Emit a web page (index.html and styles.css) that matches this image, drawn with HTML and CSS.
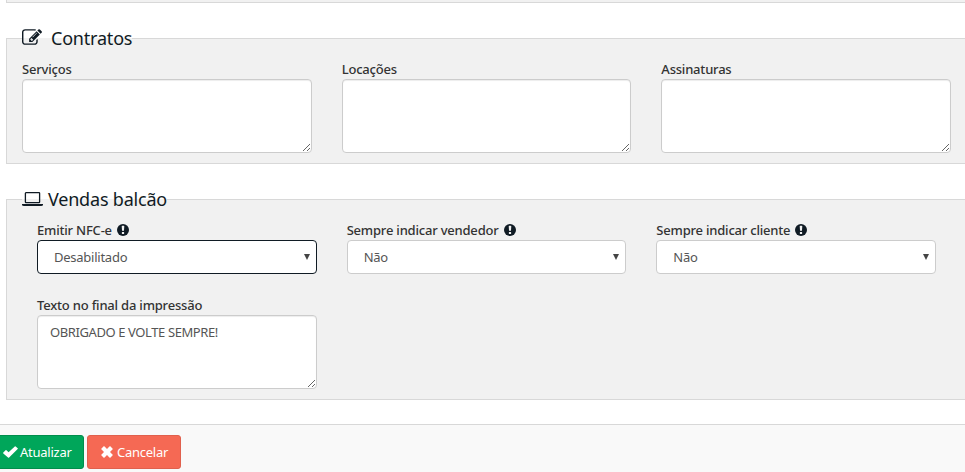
FILE: index.html
```html
<!DOCTYPE html>
<html lang="pt-BR">
<head>
<meta charset="utf-8">
<title>Configurações</title>
<link rel="stylesheet" href="styles.css">
</head>
<body>
<svg width="0" height="0" class="defs">
  <symbol id="alert" viewBox="0 0 12 12"><circle cx="6" cy="6" r="6" fill="#101b24"/><path d="M4.7 2.2Q4.7 1.7 5.2 1.7H6.8Q7.3 1.7 7.3 2.2L7 6.3Q6.9 6.9 6 6.9T5 6.3ZM4.9 7.9H7.1V9.9H4.9Z" fill="#f1f1f1"/></symbol>
  <symbol id="caret" viewBox="0 0 6 6"><path d="M0 0H6L3 6Z" fill="#444"/></symbol>
</svg>
<div class="previous"></div>
<form class="form">
  <fieldset class="section">
    <legend class="title"><svg class="edit" viewBox="0 128 1792 1408"><path fill="#101b24" d="M888 1184l116-116-152-152-116 116v56h96v96h56zm440-720q-16-16-33 1l-350 350q-17 17-1 33t33-1l350-350q17-17 1-33zm80 594v190q0 119-84.5 203.5t-203.5 84.5h-832q-119 0-203.5-84.5t-84.5-203.5v-832q0-119 84.5-203.5t203.5-84.5h832q63 0 117 25 15 7 18 23 3 17-9 29l-49 49q-14 14-32 8-23-6-45-6h-832q-66 0-113 47t-47 113v832q0 66 47 113t113 47h832q66 0 113-47t47-113v-126q0-13 9-22l64-64q15-15 35-7t20 29zm-96-738l288 288-672 672h-288v-288zm444 132l-92 92-288-288 92-92q28-28 68-28t68 28l152 152q28 28 28 68t-28 68z"/></svg><span class="contracts">Contratos</span></legend>
    <div class="grid">
      <div class="field"><label for="servicos">Serviços</label><textarea id="servicos"></textarea></div>
      <div class="field"><label for="locacoes">Locações</label><textarea id="locacoes"></textarea></div>
      <div class="field"><label for="assinaturas">Assinaturas</label><textarea id="assinaturas"></textarea></div>
    </div>
  </fieldset>
  <fieldset class="section sales">
    <legend class="title"><svg class="laptop" viewBox="0 0 21 15"><path d="M4 .7H17Q17.6.7 17.6 1.3V10.1Q17.6 10.7 17 10.7H4Q3.4 10.7 3.4 10.1V1.3Q3.4.7 4 .7Z" fill="none" stroke="#101b24" stroke-width="1.3"/><path d="M0 12H21V12.8Q21 14 19 14H2Q0 14 0 12.8Z" fill="#101b24"/></svg><span>Vendas balcão</span></legend>
    <div class="grid inset">
      <div class="field"><label for="nfce">Emitir NFC-e<svg class="alert"><use href="#alert"/></svg></label><div class="pick"><select id="nfce" class="active"><option>Desabilitado</option></select><svg class="caret"><use href="#caret"/></svg></div></div>
      <div class="field"><label for="vendedor">Sempre indicar vendedor<svg class="alert"><use href="#alert"/></svg></label><div class="pick"><select id="vendedor"><option>Não</option></select><svg class="caret"><use href="#caret"/></svg></div></div>
      <div class="field"><label for="cliente">Sempre indicar cliente<svg class="alert"><use href="#alert"/></svg></label><div class="pick"><select id="cliente"><option>Não</option></select><svg class="caret"><use href="#caret"/></svg></div></div>
      <div class="field"><label for="texto">Texto no final da impressão</label><textarea id="texto" class="caps">OBRIGADO E VOLTE SEMPRE!</textarea></div>
    </div>
  </fieldset>
</form>
<footer class="actions">
  <button type="button" class="btn save"><svg width="15" height="12" viewBox="0 0 14 12" preserveAspectRatio="none"><path d="M.3 6.6L2.4 4.3Q2.8 3.9 3.2 4.3L5.2 6.2L11 .4Q11.4 0 11.8.4L13.7 2.3Q14.1 2.7 13.7 3.1L5.7 11.4Q5.2 11.9 4.7 11.4L.3 7.4Q-.1 7 .3 6.6Z" fill="#fff"/></svg><span>Atualizar</span></button>
  <button type="button" class="btn cancel"><svg width="12" height="12" viewBox="0 0 12 12"><path d="M.3 2.7L2.7.3Q3 0 3.3.3L6 3L8.7.3Q9 0 9.3.3L11.7 2.7Q12 3 11.7 3.3L9 6L11.7 8.7Q12 9 11.7 9.3L9.3 11.7Q9 12 8.7 11.7L6 9L3.3 11.7Q3 12 2.7 11.7L.3 9.3Q0 9 .3 8.7L3 6L.3 3.3Q0 3 .3 2.7Z" fill="#fff"/></svg><span>Cancelar</span></button>
</footer>
</body>
</html>
```
FILE: styles.css
```css
* { box-sizing: border-box; }
body {
  margin: 0;
  height: 472px;
  overflow: hidden;
  background: #fff;
  color: #333;
  font: 13px/20px "Noto Sans", sans-serif;
}
.defs { display: block; }
svg { flex: none; }
.previous {
  height: 3px;
  margin-left: 6px;
  background: #f1f1f1;
  border-bottom: 1px solid #d8d8d8;
  border-left: 1px solid #d8d8d8;
}
.form { width: 967px; padding: 19px 0 0 6px; }
.section {
  width: 975px;
  height: 142px;
  margin: 0;
  padding: 0 0 0 15px;
  border: 1px solid #d8d8d8;
  background: #f1f1f1;
}
.sales { height: 217px; margin-top: 19px; }
.title {
  display: flex;
  align-items: center;
  height: 32px;
  padding: 0;
  color: #101b24;
  font: 400 18px/32px "Noto Sans", sans-serif;
  letter-spacing: -.2px;
}
.edit { width: 20px; height: 16px; margin: 0 9px 2px 0; }
.laptop { width: 21px; height: 15px; margin-right: 5px; }
.grid {
  display: grid;
  grid-template-columns: repeat(3, 289.67px);
  column-gap: 30px;
  padding-top: 5px;
}
.inset {
  grid-template-columns: repeat(3, 279.67px);
  padding-left: 15px;
  row-gap: 21px;
}
.field { display: flex; flex-direction: column; min-width: 0; }
label {
  display: flex;
  align-items: center;
  height: 20px;
  font-weight: 500;
  letter-spacing: -.2px;
  white-space: nowrap;
}
.alert { width: 12px; height: 12px; margin-left: 5px; }
textarea, select {
  display: block;
  width: 100%;
  margin: 0;
  border: 1px solid #ccc;
  border-radius: 4px;
  background: #fff;
  color: #555;
  font: 13px/20px "Noto Sans", sans-serif;
}
textarea {
  height: 74px;
  padding: 6px 12px;
  overflow: hidden;
  resize: both;
  box-shadow: inset 0 1px 1px rgba(0, 0, 0, .075);
}
.caps { letter-spacing: -.4px; }
select { height: 34px; padding: 6px 16px; appearance: none; letter-spacing: -.25px; }
.active { border-color: #101b24; }
.pick { position: relative; }
.caret { position: absolute; top: 14px; right: 7px; width: 6px; height: 6px; }
.actions {
  display: flex;
  gap: 3px;
  height: 48px;
  margin-top: 24px;
  padding-top: 10px;
  border-top: 1px solid #d8d8d8;
  background: #f9f9f9;
}
.btn {
  display: flex;
  align-items: center;
  height: 34px;
  padding: 0 12px;
  border: 1px solid;
  border-radius: 3px;
  color: #fff;
  font: 13px/20px "Noto Sans", sans-serif;
  letter-spacing: -.25px;
  white-space: nowrap;
}
.save { width: 94px; margin-left: -10px; background: #00a65a; border-color: #008d4c; }
.save svg { margin-right: 2px; }
.cancel { width: 94px; padding-left: 13px; background: #f56954; border-color: #e0604d; }
.cancel svg { margin-right: 4px; }
```
